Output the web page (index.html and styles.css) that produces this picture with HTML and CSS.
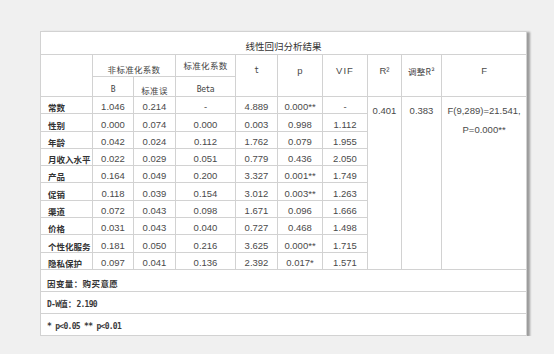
FILE: index.html
```html
<!DOCTYPE html>
<html lang="zh-CN">
<head>
<meta charset="utf-8">
<title>线性回归分析结果</title>
<link rel="stylesheet" href="styles.css">
</head>
<body>
<div class="sheet">
<table class="reg">
<colgroup>
<col class="c-label"><col class="c-b"><col class="c-se"><col class="c-beta"><col class="c-t"><col class="c-p"><col class="c-vif"><col class="c-r2"><col class="c-ar2"><col class="c-f">
</colgroup>
<thead>
<tr class="r-title"><th colspan="10" class="title">线性回归分析结果</th></tr>
<tr class="r-h1">
<th rowspan="2" class="blank"></th>
<th colspan="2" class="cn">非标准化系数</th>
<th class="cn std">标准化系数</th>
<th rowspan="2" class="mono span">t</th>
<th rowspan="2" class="span">p</th>
<th rowspan="2" class="span vif">VIF</th>
<th rowspan="2" class="span">R²</th>
<th rowspan="2" class="span cn">调整R²</th>
<th rowspan="2" class="span">F</th>
</tr>
<tr class="r-h2">
<th class="mono">B</th>
<th class="cn">标准误</th>
<th class="mono">Beta</th>
</tr>
</thead>
<tbody>
<tr><td class="lbl">常数</td><td>1.046</td><td>0.214</td><td>-</td><td>4.889</td><td>0.000**</td><td>-</td><td rowspan="10" class="top">0.401</td><td rowspan="10" class="top">0.383</td><td rowspan="10" class="top">F(9,289)=21.541,<br>P=0.000**</td></tr>
<tr><td class="lbl">性别</td><td>0.000</td><td>0.074</td><td>0.000</td><td>0.003</td><td>0.998</td><td>1.112</td></tr>
<tr><td class="lbl">年龄</td><td>0.042</td><td>0.024</td><td>0.112</td><td>1.762</td><td>0.079</td><td>1.955</td></tr>
<tr><td class="lbl">月收入水平</td><td>0.022</td><td>0.029</td><td>0.051</td><td>0.779</td><td>0.436</td><td>2.050</td></tr>
<tr><td class="lbl">产品</td><td>0.164</td><td>0.049</td><td>0.200</td><td>3.327</td><td>0.001**</td><td>1.749</td></tr>
<tr><td class="lbl">促销</td><td>0.118</td><td>0.039</td><td>0.154</td><td>3.012</td><td>0.003**</td><td>1.263</td></tr>
<tr><td class="lbl">渠道</td><td>0.072</td><td>0.043</td><td>0.098</td><td>1.671</td><td>0.096</td><td>1.666</td></tr>
<tr><td class="lbl">价格</td><td>0.031</td><td>0.043</td><td>0.040</td><td>0.727</td><td>0.468</td><td>1.498</td></tr>
<tr><td class="lbl">个性化服务</td><td>0.181</td><td>0.050</td><td>0.216</td><td>3.625</td><td>0.000**</td><td>1.715</td></tr>
<tr><td class="lbl">隐私保护</td><td>0.097</td><td>0.041</td><td>0.136</td><td>2.392</td><td>0.017*</td><td>1.571</td></tr>
</tbody>
<tfoot>
<tr class="r-foot"><td colspan="10" class="note cnnote">因变量：购买意愿</td></tr>
<tr class="r-foot"><td colspan="10" class="note mononote">D-W<span class="cjk">值：</span>2.190</td></tr>
<tr class="r-foot last"><td colspan="10" class="note mononote">* p&lt;0.05 ** p&lt;0.01</td></tr>
</tfoot>
</table>
</div>
</body>
</html>
```
FILE: styles.css
```css
html, body {
  margin: 0;
  padding: 0;
  background: #f0f0f0;
}
body {
  padding: 31px 0 0 40px;
  font-family: "Liberation Sans", Arial, "Noto Sans CJK SC", sans-serif;
  color: #4a4a4a;
}
.sheet {
  width: 486px;
}
.reg {
  width: 486px;
  table-layout: fixed;
  border-collapse: collapse;
  background: #fff;
  box-shadow: 3px 1px 2px rgba(0, 0, 0, 0.35);
}
.c-label { width: 52px; }
.c-b { width: 41px; }
.c-se { width: 42px; }
.c-beta { width: 60px; }
.c-t { width: 42px; }
.c-p { width: 45px; }
.c-vif { width: 45px; }
.c-r2 { width: 34px; }
.c-ar2 { width: 40px; }
.c-f { width: 85px; }

.reg th, .reg td {
  border: 1px solid #d2d2d2;
  padding: 0 0 1px 0;
  text-align: center;
  vertical-align: bottom;
  font-size: 9.5px;
  line-height: 12px;
  font-weight: normal;
  white-space: nowrap;
  overflow: hidden;
}
.reg .r-title th { height: 20px; }
.title {
  font-family: "Noto Sans CJK SC", sans-serif;
  font-weight: 700;
  font-size: 8.5px;
  color: #333;
  padding-bottom: 2px !important;
}
.reg .r-h1 th { height: 20px; }
.reg .r-h1 th.std { height: 16px; padding-bottom: 5px; }
.reg .r-h2 th { height: 17px; padding: 2px 0 0 0; }
.reg .cn {
  font-family: "Noto Sans CJK SC", sans-serif;
  font-size: 8.5px;
  letter-spacing: 0.3px;
  color: #444;
}
.reg .mono {
  font-family: "DejaVu Sans Mono", monospace;
  font-size: 8px;
  letter-spacing: -0.5px;
  color: #444;
}
.reg .r-h1 th.span {
  vertical-align: top;
  padding-top: 10px;
  height: auto;
}
.reg .vif { letter-spacing: 1px; }

.reg tbody td { height: 13.3px; padding: 3px 0 0 0; }
.reg td.lbl {
  text-align: left;
  padding-left: 7px;
  font-family: "Noto Sans CJK SC", sans-serif;
  font-weight: 700;
  font-size: 8.5px;
  color: #333;
}
.reg td.top {
  vertical-align: top;
  padding-top: 4px;
  line-height: 19px;
  height: auto;
}

.reg .r-foot td { height: 19px; }
.reg .r-foot.last td { height: 19px; }
.reg td.note {
  text-align: left;
  padding-left: 6px;
  padding-bottom: 2px;
  color: #333;
}
.reg td.cnnote {
  font-family: "Noto Sans CJK SC", sans-serif;
  font-weight: 700;
  font-size: 8.5px;
  letter-spacing: 0.4px;
}
.reg td.mononote {
  font-family: "DejaVu Sans Mono", "Noto Sans CJK SC", monospace;
  font-size: 8px;
  letter-spacing: -0.7px;
  font-weight: 700;
  color: #3a3a3a;
}
.reg .mononote .cjk {
  font-family: "Noto Sans CJK SC", sans-serif;
  font-weight: 700;
  font-size: 8.5px;
  letter-spacing: 0;
}
```
